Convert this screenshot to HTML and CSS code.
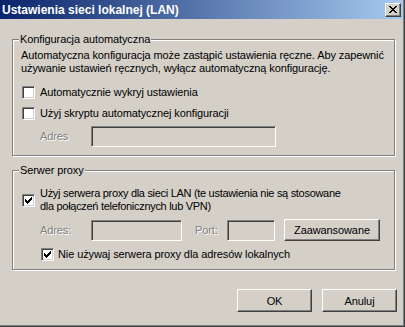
FILE: index.html
```html
<!DOCTYPE html>
<html lang="pl">
<head>
  <meta charset="UTF-8" />
  <title>Ustawienia sieci lokalnej (LAN)</title>
  <link rel="stylesheet" href="styles.css">
</head>
<body>

  <div class="window">
    <div class="titlebar">
      <span class="title">Ustawienia sieci lokalnej (LAN)</span>
      <span class="close-btn">
        <svg width="8" height="7" viewBox="0 0 8 7" shape-rendering="crispEdges">
          <path d="M0 0h2v1h-2z M6 0h2v1h-2z M1 1h2v1h-2z M5 1h2v1h-2z M2 2h4v1h-4z M3 3h2v1h-2z M2 4h4v1h-4z M1 5h2v1h-2z M5 5h2v1h-2z M0 6h2v1h-2z M6 6h2v1h-2z" fill="#000"/>
        </svg>
      </span>
    </div>

    <div class="content">
      <fieldset class="group auto">
        <legend>Konfiguracja automatyczna</legend>
        <p class="note">Automatyczna konfiguracja może zastąpić ustawienia ręczne. Aby zapewnić<br>używanie ustawień ręcznych, wyłącz automatyczną konfigurację.</p>
        <div class="check-row first"><span class="chk"></span>Automatycznie wykryj ustawienia</div>
        <div class="check-row second"><span class="chk"></span>Użyj skryptu automatycznej konfiguracji</div>
        <div class="field-row script">
          <span class="dis lbl-script">Adres</span>
          <span class="box box-script"></span>
        </div>
      </fieldset>

      <fieldset class="group proxy">
        <legend>Serwer proxy</legend>
        <div class="check-row two-line">
          <span class="chk on">
            <svg width="7" height="7" viewBox="0 0 7 7" shape-rendering="crispEdges">
              <path d="M6 0h1v1h-1z M5 1h2v1h-2z M0 2h1v1h-1z M4 2h3v1h-3z M0 3h2v1h-2z M3 3h3v1h-3z M0 4h5v1h-5z M1 5h3v1h-3z M2 6h1v1h-1z" fill="#000"/>
            </svg>
          </span>
          <span class="proxy-text">Użyj serwera proxy dla sieci LAN (te ustawienia nie są stosowane<br>dla połączeń telefonicznych lub VPN)</span>
        </div>
        <div class="field-row proxy-row">
          <span class="dis lbl-addr">Adres:</span>
          <span class="box box-addr"></span>
          <span class="dis lbl-port">Port:</span>
          <span class="box box-port"></span>
          <button class="btn btn-adv">Zaawansowane</button>
        </div>
        <div class="check-row sub">
          <span class="chk on">
            <svg width="7" height="7" viewBox="0 0 7 7" shape-rendering="crispEdges">
              <path d="M6 0h1v1h-1z M5 1h2v1h-2z M0 2h1v1h-1z M4 2h3v1h-3z M0 3h2v1h-2z M3 3h3v1h-3z M0 4h5v1h-5z M1 5h3v1h-3z M2 6h1v1h-1z" fill="#000"/>
            </svg>
          </span>
          Nie używaj serwera proxy dla adresów lokalnych
        </div>
      </fieldset>

      <div class="actions">
        <button class="btn">OK</button>
        <button class="btn">Anuluj</button>
      </div>
    </div>
  </div>

</body>
</html>
```

FILE: styles.css
```css
/* Klasyczne okno dialogowe Windows */
html, body {
  margin: 0;
  padding: 0;
}

body {
  width: 405px;
  height: 327px;
  overflow: hidden;
  background: #d4d0c8;
  font-family: 'Liberation Sans', Arial, sans-serif;
  font-size: 11px;
  line-height: 13px;
  letter-spacing: -0.1px;
  white-space: nowrap;
  color: #000;
}

.window {
  box-sizing: border-box;
  width: 405px;
  height: 327px;
  background: #d4d0c8;
  border-right: 1px solid #404040;
  border-bottom: 1px solid #404040;
  box-shadow: inset -1px -1px 0 #808080;
}

/* Pasek tytułu */
.titlebar {
  height: 19px;
  margin-right: 1px;
  display: flex;
  align-items: center;
  justify-content: space-between;
  background: linear-gradient(to right, #0a246a, #a6caf0);
}

.title {
  padding-left: 2px;
  padding-top: 1px;
  color: #fff;
  font-weight: 700;
  font-size: 12px;
  letter-spacing: 0;
}

.close-btn {
  box-sizing: border-box;
  width: 16px;
  height: 14px;
  margin-right: 2px;
  display: flex;
  align-items: center;
  justify-content: center;
  background: #d4d0c8;
  border: 1px solid;
  border-color: #fff #404040 #404040 #fff;
  box-shadow: inset -1px -1px 0 #808080;
}

.close-btn svg {
  display: block;
  margin-left: -1px;
}

/* Zawartość */
.content {
  padding: 14px 7px 0 12px;
}

.group {
  margin: 0 2px 0 0;
  padding: 0 8px 8px 8px;
  min-width: 0;
  border: 1px solid #808080;
  box-shadow: inset 1px 1px 0 #fff, 1px 1px 0 #fff;
}

.group legend {
  margin-left: -2px;
  padding: 0 1px;
  background: #d4d0c8;
}

.group.proxy {
  margin-top: 8px;
}

.note {
  margin: 3px 0 0 0;
}

.check-row {
  display: flex;
  align-items: center;
}

.check-row.first { margin-top: 11px; }
.check-row.second { margin-top: 8px; }
.check-row.two-line { margin-top: 10px; }
.check-row.sub { margin-top: 7px; padding-left: 19px; }

.proxy-text {
  letter-spacing: -0.3px;
}

/* Pola wyboru */
.chk {
  box-sizing: border-box;
  width: 13px;
  height: 13px;
  flex: none;
  margin: 0 5px 0 1px;
  background: #fff;
  border: 1px solid;
  border-color: #808080 #fff #fff #808080;
  box-shadow: inset 1px 1px 0 #404040, inset -1px -1px 0 #d4d0c8;
  display: flex;
  align-items: center;
  justify-content: center;
}

.chk svg {
  display: block;
}

.check-row.sub .chk {
  margin-right: 4px;
}

/* Wiersze z polami tekstowymi */
.field-row {
  display: flex;
  align-items: center;
  padding-left: 19px;
}

.field-row.script { margin-top: 6px; }
.field-row.proxy-row { margin-top: 6px; }

.dis {
  color: #808080;
  text-shadow: 1px 1px 0 #fff;
}

.lbl-script,
.lbl-addr {
  width: 51px;
}

.lbl-port {
  margin-left: 13px;
  width: 32px;
}

.box {
  box-sizing: border-box;
  height: 21px;
  background: #d4d0c8;
  border: 1px solid;
  border-color: #808080 #fff #fff #808080;
  box-shadow: inset 1px 1px 0 #404040, inset -1px -1px 0 #d4d0c8;
}

.box-script { width: 185px; }
.box-addr { width: 91px; }
.box-port { width: 48px; }

/* Przyciski */
.btn {
  box-sizing: border-box;
  height: 23px;
  width: 75px;
  padding: 0;
  background: #d4d0c8;
  border: 1px solid;
  border-color: #fff #404040 #404040 #fff;
  box-shadow: inset -1px -1px 0 #808080;
  font-family: inherit;
  font-size: 11px;
  letter-spacing: inherit;
  color: #000;
}

.btn-adv {
  width: 96px;
  height: 22px;
  margin-left: 9px;
}

.actions {
  display: flex;
  justify-content: flex-end;
  gap: 10px;
  margin-top: 19px;
}
```
